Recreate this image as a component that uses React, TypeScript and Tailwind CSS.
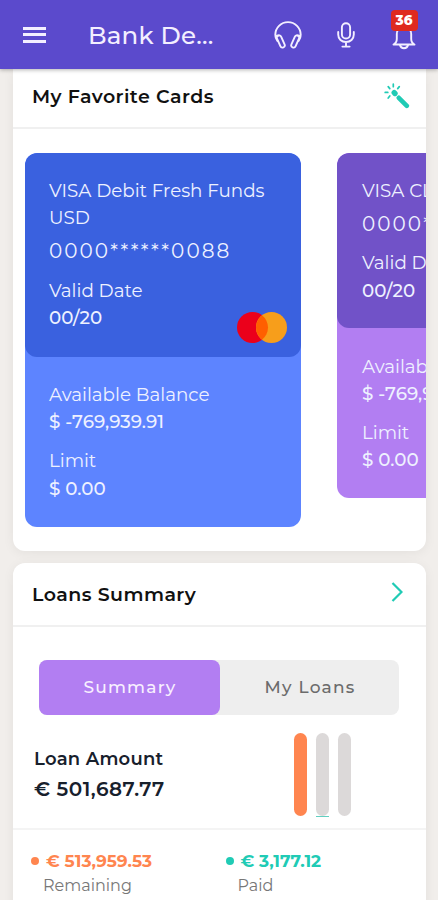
import { clsx } from "clsx";

interface BankCard {
  name: string;
  number: string;
  validDate: string;
  balance: string;
  limit: string;
  topClass: string;
  bottomClass: string;
  hasLogo: boolean;
}

const CARDS: BankCard[] = [
  {
    name: "VISA Debit Fresh Funds USD",
    number: "0000******0088",
    validDate: "00/20",
    balance: "$ -769,939.91",
    limit: "$ 0.00",
    topClass: "bg-[#3a61df] px-6 pb-[26px]",
    bottomClass: "bg-[#5d84ff]",
    hasLogo: true,
  },
  {
    name: "VISA CLASSIC",
    number: "0000******0077",
    validDate: "00/20",
    balance: "$ -769,939.91",
    limit: "$ 0.00",
    topClass: "bg-[#7152c8] px-[25px] pb-6",
    bottomClass: "bg-[#b27ef2]",
    hasLogo: false,
  },
];

function HeadsetIcon() {
  return (
    <svg width="28" height="28" viewBox="0 0 28 28" fill="none" stroke="currentColor" strokeWidth="1.9" strokeLinecap="round" strokeLinejoin="round">
      <path d="M3.400 20C2 18.200 1.300 16.200 1.300 13.800a12.700 12.700 0 0 1 25.400 0c0 2.400-.7 4.400-2.100 6.200" />
      <path d="M1.800 15.500c.8-.9 1.900-1.200 3-1.100M26.200 15.500c-.8-.9-1.900-1.200-3-1.100" />
      <rect x="4.500" y="14.100" width="4.600" height="12.800" rx="2.300" transform="rotate(-24 6.800 20.500)" />
      <rect x="18.900" y="14.100" width="4.600" height="12.800" rx="2.300" transform="rotate(24 21.200 20.500)" />
    </svg>
  );
}

function MicIcon() {
  return (
    <svg width="18" height="26" viewBox="0 0 18 26" fill="none" stroke="currentColor" strokeWidth="1.9" strokeLinecap="round">
      <rect x="4.900" y="1.200" width="8.200" height="15.300" rx="4.100" />
      <path d="M1.200 10v2.500c0 4.600 3.400 7.500 7.800 7.500s7.800-2.900 7.800-7.500V10M9 20v4.500M5.400 24.600h7.200" />
    </svg>
  );
}

function BellIcon() {
  return (
    <svg width="24" height="28" viewBox="0 0 24 28" fill="none" stroke="currentColor" strokeWidth="1.900" strokeLinecap="round" strokeLinejoin="round">
      <path d="M4.800 16V11a7.200 7.200 0 0 1 14.400 0v5c0 2.400 1 4.400 3.300 5.500h-21C3.800 20.400 4.800 18.400 4.800 16Z" />
      <path d="M8 22a4.100 4.100 0 0 0 8 0" />
    </svg>
  );
}

function WandIcon() {
  return (
    <svg width="26" height="26" viewBox="0 0 26 26" fill="none" stroke="currentColor" strokeLinecap="round">
      <path d="M9.300 1v2.700M4.200 3.600l1.600 2M15.300 3.600l-1.600 2M1.200 9.400h2.600M4.200 15l1.600-2" strokeWidth="1.700" />
      <path d="M10.200 9.700l.8.800" strokeWidth="5.400" />
      <path d="M14.800 14.800l8 8" strokeWidth="4.600" />
    </svg>
  );
}

function CardLogo() {
  return (
    <svg className="absolute bottom-3.5 right-3.5" width="50" height="31" viewBox="0 0 50 31">
      <circle cx="15.500" cy="15.500" r="15.500" fill="#eb001b" />
      <circle cx="34.500" cy="15.500" r="15.500" fill="#f79e1b" />
      <path d="M25 3.250a15.500 15.500 0 0 1 0 24.500a15.500 15.500 0 0 1 0-24.500Z" fill="#ff5f00" />
    </svg>
  );
}

function Header() {
  return (
    <header className="relative z-10 flex h-[69px] shrink-0 items-center bg-[#5b4acc] pl-[23px] pr-[22px] text-[#f3efff] shadow-[0_1px_4px_rgba(0,0,0,0.3)]">
      <div className="flex w-[23px] flex-col gap-[3.5px]">
        <span className="h-[3px] bg-current" />
        <span className="h-[3px] bg-current" />
        <span className="h-[3px] bg-current" />
      </div>
      <h1 className="ml-[42px] pt-px text-[24.500px] font-medium tracking-[0.200px]">Bank De...</h1>
      <div className="ml-auto flex items-center">
        <HeadsetIcon />
        <div className="ml-[35px]">
          <MicIcon />
        </div>
        <div className="relative ml-[37px] pt-1">
          <BellIcon />
          <span className="absolute -top-[9px] left-[-1.5px] flex h-[21px] w-[27px] items-center justify-center rounded bg-[#df2a1f] text-[13.500px] font-extrabold text-white">
            36
          </span>
        </div>
      </div>
    </header>
  );
}

function FavoriteCard({ card }: { card: BankCard }) {
  return (
    <div className={clsx("w-[276px] shrink-0 overflow-hidden rounded-xl text-[18.3px] leading-[27.2px] text-[#eef1ff]", card.bottomClass)}>
      <div className={clsx("relative rounded-xl pt-6", card.topClass)}>
        <p>{card.name}</p>
        <p className="mt-[7px] text-[20px] tracking-[2.050px]">{card.number}</p>
        <p className="mt-[11px]">Valid Date</p>
        <p className="font-medium">{card.validDate}</p>
        {card.hasLogo && <CardLogo />}
      </div>
      <div className={clsx(card.hasLogo ? "px-6 pb-[25px] pt-6" : "px-[25px] pb-6 pt-[25px]")}>
        <p>Available Balance</p>
        <p className="font-medium">{card.balance}</p>
        <p className="mt-3">Limit</p>
        <p className="font-medium">{card.limit}</p>
      </div>
    </div>
  );
}

function LoanFigure({ amount, label, className }: { amount: string; label: string; className: string }) {
  return (
    <div className="w-[194.500px]">
      <p className={clsx("flex items-center text-[17px] font-bold leading-6", className)}>
        <span className="mr-[7px] h-2 w-2 rounded-full bg-current" />
        {amount}
      </p>
      <p className="pl-3 text-[16px] leading-[25px] text-[#777]">{label}</p>
    </div>
  );
}

export default function App() {
  return (
    <div className="flex h-[900px] w-[438px] flex-col overflow-hidden bg-[#f1eeeb] font-[Montserrat,Inter,sans-serif]">
      <Header />

      {/* Favorite cards */}
      <section className="mx-3 ml-[13px] h-[482px] shrink-0 overflow-hidden rounded-b-xl bg-white shadow-[0_2px_12px_rgba(0,0,0,0.06)]">
        <div className="flex h-[60px] items-center border-b-2 border-[#f0f0f0] pb-1 pl-[19px] pr-[16px]">
          <h2 className="pt-[3px] text-[19px] font-semibold tracking-[0.45px] text-[#111]">My Favorite Cards</h2>
          <span className="ml-auto text-[#20cbb5]">
            <WandIcon />
          </span>
        </div>
        <div className="flex items-start gap-9 pl-3 pt-6">
          {CARDS.map((card) => (
            <FavoriteCard key={card.name} card={card} />
          ))}
        </div>
      </section>

      {/* Loans summary */}
      <section className="mx-3 ml-[13px] mt-3 h-[360px] shrink-0 rounded-t-xl bg-white shadow-[0_2px_12px_rgba(0,0,0,0.06)]">
        <div className="flex h-[64px] items-center border-b-2 border-[#f0f0f0] pb-1 pl-[19px] pr-[23px]">
          <h2 className="pt-[6px] text-[19px] font-semibold tracking-[0.45px] text-[#111]">Loans Summary</h2>
          <svg className="ml-auto text-[#20cbb5]" width="12" height="20" viewBox="0 0 12 20" fill="none" stroke="currentColor" strokeWidth="2.200">
            <path d="M1.500 1l9 9l-9 9" />
          </svg>
        </div>

        <div className="ml-[26px] mr-[27px] mt-[33px] flex h-[55px] rounded-lg bg-[#eee] text-[17px] font-medium tracking-[1.200px]">
          <button className="w-[181px] rounded-lg bg-[#b27ef2] pt-px pl-px text-[#f8f0ff]">Summary</button>
          <button className="flex-1 pt-px pl-px text-[#6b6b6b]">My Loans</button>
        </div>

        <div className="flex h-[115px] border-b-2 border-[#f4f4f4] pl-[21px] pt-[18px]">
          <div className="w-[260px] pt-[12px]">
            <p className="text-[18px] font-semibold leading-[29px] tracking-[0.250px] text-[#17202c]">Loan Amount</p>
            <p className="text-[20px] font-semibold leading-[30px] tracking-[0.500px] text-[#17202c]">€ 501,687.77</p>
          </div>
          <div className="flex gap-[9px]">
            <span className="h-[83px] w-[13px] rounded-full bg-[#ff854f]" />
            <div className="flex w-[13px] flex-col">
              <span className="h-[83px] rounded-full bg-[#dcd9d9]" />
              <span className="h-px bg-[#62cfc0]" />
            </div>
            <span className="h-[83px] w-[13px] rounded-full bg-[#dcd9d9]" />
          </div>
        </div>

        <div className="flex pl-[18px] pt-[19px]">
          <LoanFigure amount="€ 513,959.53" label="Remaining" className="text-[#ff854f]" />
          <LoanFigure amount="€ 3,177.12" label="Paid" className="text-[#20cbb5]" />
        </div>
      </section>
    </div>
  );
}
